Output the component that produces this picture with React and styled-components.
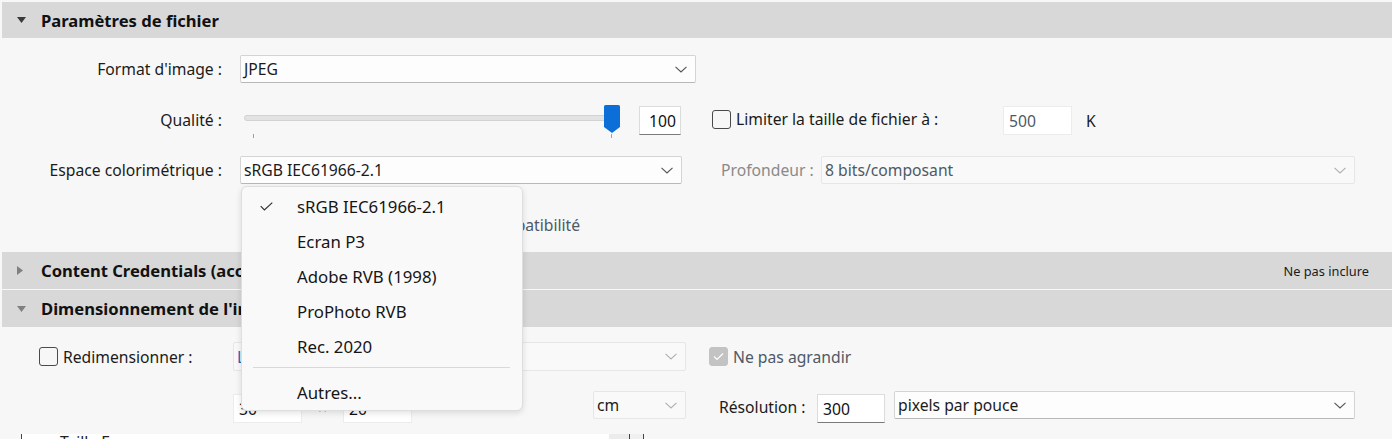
import React from "react";
import styled, { createGlobalStyle } from "styled-components";

const GlobalStyle = createGlobalStyle`
  html, body { margin: 0; padding: 0; background: #f7f7f7; }
  body { font-family: "Noto Sans", "Open Sans", sans-serif; color: #1b1b1b; }
  * { box-sizing: border-box; }
`;

const FS = 15.7;

const Page = styled.div`
  position: relative;
  width: 1392px;
  height: 439px;
  overflow: hidden;
  background: #f7f7f7;
  padding: 2px 0 0 2px;
  display: flex;
  flex-direction: column;
  font-size: ${FS}px;
`;

const SectionHeader = styled.div`
  flex: none;
  height: ${(p) => p.$h || 36}px;
  margin-top: ${(p) => p.$gap || 0}px;
  background: #d8d8d8;
  display: flex;
  align-items: center;
  padding: 0 23px 0 15px;
`;

const CaretBox = styled.span`
  width: 24px;
  display: flex;
  align-items: center;
`;

const HeaderTitle = styled.span`
  font-weight: 700;
  font-size: 16.6px;
  color: #111;
  white-space: nowrap;
`;

const HeaderAside = styled.span`
  margin-left: auto;
  font-size: 12.8px;
  color: #1b1b1b;
`;

const SectionBody = styled.div`
  flex: none;
  height: ${(p) => p.$h}px;
  display: flex;
  flex-direction: column;
  padding-top: ${(p) => p.$pt || 0}px;
`;

const FormRow = styled.div`
  display: flex;
  align-items: ${(p) => p.$align || "center"};
  height: ${(p) => p.$h}px;
  margin-top: ${(p) => p.$mt || 0}px;
  padding-left: ${(p) => p.$pl || 0}px;
  flex: none;
`;

const FieldLabel = styled.span`
  width: ${(p) => p.$w || 238}px;
  flex: none;
  text-align: ${(p) => (p.$left ? "left" : "right")};
  padding-right: ${(p) => (p.$left ? 0 : 18)}px;
  margin-left: ${(p) => p.$ml || 0}px;
  margin-top: ${(p) => p.$mt || 0}px;
  align-self: ${(p) => (p.$center ? "center" : "auto")};
  color: ${(p) => (p.$muted ? "#8a8a8a" : "#1b1b1b")};
  white-space: nowrap;
`;

const SelectBox = styled.div`
  flex: none;
  width: ${(p) => p.$w}px;
  height: ${(p) => p.$h || 28}px;
  margin-left: ${(p) => p.$ml || 0}px;
  margin-top: ${(p) => p.$mt || 0}px;
  display: flex;
  align-items: center;
  justify-content: space-between;
  padding: 0 8px 0 3px;
  background: ${(p) => (p.$disabled ? "#f9f9f9" : "#fdfdfd")};
  border: 1px solid ${(p) => (p.$disabled ? "#e6e6e6" : "#d4d4d4")};
  border-bottom-color: ${(p) => (p.$disabled ? "#e6e6e6" : "#b8b8b8")};
  border-radius: 2px;
  color: ${(p) => (p.$disabled ? "#4e5966" : "#1b1b1b")};
  white-space: nowrap;
  overflow: hidden;
`;

const SelectText = styled.span`
  color: ${(p) => p.$color || "inherit"};
`;

const Chevron = ({ muted }) => (
  <svg width="12" height="7" viewBox="0 0 12 7" style={{ flex: "none" }}>
    <polyline
      points="0.5,0.8 6,6 11.5,0.8"
      fill="none"
      stroke={muted ? "#b0b0b0" : "#555"}
      strokeWidth="1.1"
    />
  </svg>
);

const TextField = styled.div`
  flex: none;
  width: ${(p) => p.$w}px;
  height: ${(p) => p.$h || 29}px;
  margin-left: ${(p) => p.$ml || 0}px;
  margin-top: ${(p) => p.$mt || 0}px;
  display: flex;
  align-items: center;
  justify-content: ${(p) => (p.$right ? "flex-end" : "flex-start")};
  padding: 0 4px 0 5px;
  background: #fff;
  border: 1px solid ${(p) => (p.$active ? "#dcdcdc" : "#ececec")};
  border-bottom-color: ${(p) => (p.$active ? "#7a7a7a" : "#ececec")};
  color: ${(p) => (p.$muted ? "#4e5966" : "#111")};
`;

const CheckWrap = styled.label`
  display: flex;
  align-items: center;
  flex: none;
  width: ${(p) => (p.$w ? p.$w + "px" : "auto")};
  margin-left: ${(p) => p.$ml || 0}px;
  margin-top: ${(p) => p.$mt || 0}px;
  gap: 5px;
  color: ${(p) => (p.$muted ? "#4e5966" : "#1b1b1b")};
  white-space: nowrap;
`;

const CheckSquare = styled.span`
  width: 19px;
  height: 19px;
  flex: none;
  border-radius: 3px;
  border: 1px solid ${(p) => (p.$checked ? "#c3c3c3" : "#4a4a4a")};
  background: ${(p) => (p.$checked ? "#c3c3c3" : "transparent")};
  display: flex;
  align-items: center;
  justify-content: center;
`;

const Checkbox = ({ checked }) => (
  <CheckSquare $checked={checked}>
    {checked && (
      <svg width="11" height="9" viewBox="0 0 11 9">
        <polyline points="1,4.5 4,7.5 10,1.5" fill="none" stroke="#fff" strokeWidth="1.2" />
      </svg>
    )}
  </CheckSquare>
);

const SliderBox = styled.div`
  position: relative;
  flex: none;
  width: 380px;
  height: 34px;
`;

const SliderTrack = styled.div`
  position: absolute;
  left: 4px;
  right: 1px;
  top: 10px;
  height: 6px;
  background: #e3e3e3;
  border: 1px solid #d2d2d2;
  border-radius: 3px;
`;

const SliderTick = styled.span`
  position: absolute;
  left: ${(p) => p.$x}px;
  top: 29px;
  width: 1px;
  height: 4px;
  background: #a0a0a0;
`;

const ThumbSvg = styled.svg`
  position: absolute;
  left: 364px;
  top: 0;
`;

const Unit = styled.span`
  margin-left: ${(p) => p.$ml || 0}px;
  margin-top: ${(p) => p.$mt || 0}px;
  width: ${(p) => (p.$w ? p.$w + "px" : "auto")};
  text-align: ${(p) => (p.$center ? "center" : "left")};
  flex: none;
  color: ${(p) => (p.$muted ? "#6a6a6a" : "#1b1b1b")};
`;

const BottomStrip = styled.div`
  flex: none;
  margin-top: ${(p) => p.$mt || 0}px;
  height: 12px;
  display: flex;
  padding-left: 19px;
`;

const ListPane = styled.div`
  width: 609px;
  height: 100%;
  background: #fff;
  border-left: 1px solid #444;
  border-right: 1px solid #444;
  padding: 0 0 0 38px;
  line-height: 12px;
  overflow: hidden;
  display: flex;
  justify-content: space-between;
`;

const ListText = styled.span`
  margin-top: 2px;
  color: #222;
`;

const ListScroll = styled.span`
  width: 20px;
  height: 100%;
  background: #ececec;
`;

const SidePane = styled.div`
  width: 14px;
  height: 100%;
  border-right: 1px solid #444;
  background: #f0f0f0;
`;

const Menu = styled.div`
  position: absolute;
  left: 241px;
  top: 186px;
  width: 282px;
  padding: 2px 0 0;
  height: 225px;
  background: #f9f9f9;
  border: 1px solid #dedede;
  border-radius: 6px;
  box-shadow: 0 2px 6px rgba(0, 0, 0, 0.12);
  font-size: 16.8px;
  color: #151515;
`;

const MenuItem = styled.div`
  height: 35px;
  display: flex;
  align-items: center;
  padding-left: 18px;
`;

const MenuCheck = styled.span`
  width: 37px;
  flex: none;
  display: flex;
  align-items: center;
`;

const MenuSeparator = styled.div`
  height: 1px;
  background: #d9d9d9;
  margin: 3px 12px 7px 11px;
`;

const Caret = ({ dir, color }) =>
  dir === "down" ? (
    <svg width="9" height="6" viewBox="0 0 9 6">
      <polygon points="0,0 9,0 4.5,6" fill={color} />
    </svg>
  ) : (
    <svg width="6" height="9" viewBox="0 0 6 9">
      <polygon points="0,0 6,4.5 0,9" fill={color} />
    </svg>
  );

export default function App() {
  const items = ["sRGB IEC61966-2.1", "Ecran P3", "Adobe RVB (1998)", "ProPhoto RVB", "Rec. 2020"];
  return (
    <>
      <GlobalStyle />
      <Page>
        <SectionHeader>
          <CaretBox><Caret dir="down" color="#3a3a3a" /></CaretBox>
          <HeaderTitle>Paramètres de fichier</HeaderTitle>
        </SectionHeader>

        <SectionBody $h={214} $pt={17}>
          <FormRow $h={28}>
            <FieldLabel>Format d'image :</FieldLabel>
            <SelectBox $w={456}>
              <SelectText>JPEG</SelectText>
              <Chevron />
            </SelectBox>
          </FormRow>

          <FormRow $h={34} $mt={22} $align="flex-start">
            <FieldLabel $center $mt={-4}>Qualité :</FieldLabel>
            <SliderBox>
              <SliderTrack />
              <SliderTick $x={13} />
              <SliderTick $x={371} />
              <ThumbSvg width="16" height="28" viewBox="0 0 16 28">
                <path d="M1.5 0 H14.5 Q16 0 16 1.5 V22 L8 28 L0 22 V1.5 Q0 0 1.5 0 Z" fill="#0b6fd7" />
              </ThumbSvg>
            </SliderBox>
            <TextField $w={42} $ml={19} $mt={1} $right $active>100</TextField>
            <CheckWrap $ml={31} $w={291} $mt={3}>
              <Checkbox />
              <span>Limiter la taille de fichier à :</span>
            </CheckWrap>
            <TextField $w={69} $mt={1} $muted>500</TextField>
            <Unit $ml={14} $mt={5}>K</Unit>
          </FormRow>

          <FormRow $h={28} $mt={17}>
            <FieldLabel>Espace colorimétrique :</FieldLabel>
            <SelectBox $w={442}>
              <SelectText>sRGB IEC61966-2.1</SelectText>
              <Chevron />
            </SelectBox>
            <FieldLabel $left $ml={39} $w={100} $muted>Profondeur :</FieldLabel>
            <SelectBox $w={534} $disabled>
              <SelectText>8 bits/composant</SelectText>
              <Chevron muted />
            </SelectBox>
          </FormRow>

          <FormRow $h={28} $mt={27} $pl={246}>
            <CheckWrap $muted $w={114}>
              <Checkbox />
              <span>Sortie HDR</span>
            </CheckWrap>
            <CheckWrap $muted>
              <Checkbox />
              <span>Maximiser la compatibilité</span>
            </CheckWrap>
          </FormRow>
        </SectionBody>

        <SectionHeader $h={37}>
          <CaretBox><Caret dir="right" color="#808080" /></CaretBox>
          <HeaderTitle>Content Credentials (accès anticipé)</HeaderTitle>
          <HeaderAside>Ne pas inclure</HeaderAside>
        </SectionHeader>

        <SectionHeader $h={37} $gap={1}>
          <CaretBox><Caret dir="down" color="#808080" /></CaretBox>
          <HeaderTitle>Dimensionnement de l'image</HeaderTitle>
        </SectionHeader>

        <SectionBody $h={107} $pt={15}>
          <FormRow $h={29} $pl={37}>
            <CheckWrap $w={194}>
              <Checkbox />
              <span>Redimensionner :</span>
            </CheckWrap>
            <SelectBox $w={453} $h={29} $disabled>
              <SelectText $color="#1a6cc0">Largeur et hauteur</SelectText>
              <Chevron muted />
            </SelectBox>
            <CheckWrap $ml={23} $muted>
              <Checkbox checked />
              <span>Ne pas agrandir</span>
            </CheckWrap>
          </FormRow>

          <FormRow $h={32} $mt={20} $pl={231} $align="flex-start">
            <TextField $w={69} $mt={3}>30</TextField>
            <Unit $w={41} $center $muted $mt={6}>×</Unit>
            <TextField $w={69} $mt={3}>20</TextField>
            <SelectBox $w={93} $ml={181} $disabled>
              <SelectText $color="#1b1b1b">cm</SelectText>
              <Chevron muted />
            </SelectBox>
            <FieldLabel $left $ml={33} $w={98} $mt={5}>Résolution :</FieldLabel>
            <TextField $w={68} $mt={3} $active>300</TextField>
            <SelectBox $w={461} $ml={9}>
              <SelectText>pixels par pouce</SelectText>
              <Chevron />
            </SelectBox>
          </FormRow>
        </SectionBody>

        <BottomStrip>
          <ListPane>
            <ListText>Taille Ecran</ListText>
            <ListScroll />
          </ListPane>
          <SidePane />
        </BottomStrip>

        <Menu>
          {items.map((it, i) => (
            <MenuItem key={it}>
              <MenuCheck>
                {i === 0 && (
                  <svg width="13" height="9" viewBox="0 0 13 9">
                    <polyline points="0.7,4.2 4.4,8 12.3,0.6" fill="none" stroke="#333" strokeWidth="1.2" />
                  </svg>
                )}
              </MenuCheck>
              <span>{it}</span>
            </MenuItem>
          ))}
          <MenuSeparator />
          <MenuItem>
            <MenuCheck />
            <span>Autres...</span>
          </MenuItem>
        </Menu>
      </Page>
    </>
  );
}
